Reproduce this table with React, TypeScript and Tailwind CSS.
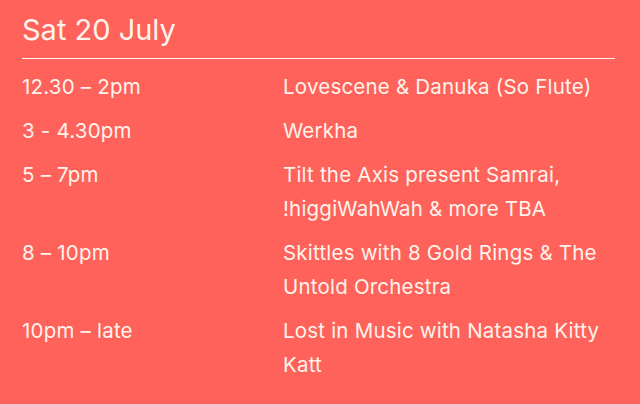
const schedule = [
  { time: "12.30 – 2pm", act: "Lovescene & Danuka (So Flute)" },
  { time: "3 - 4.30pm", act: "Werkha" },
  { time: "5 – 7pm", act: "Tilt the Axis present Samrai, !higgiWahWah & more TBA" },
  { time: "8 – 10pm", act: "Skittles with 8 Gold Rings & The Untold Orchestra" },
  { time: "10pm – late", act: "Lost in Music with Natasha Kitty Katt" },
];

export default function App() {
  return (
    <div className="w-[640px] h-[404px] overflow-hidden bg-[#fe625a] text-[#fff3ec] font-['Inter',sans-serif]">
      <div className="pl-[22px] pr-[25px] pt-[11px]">
        <h2 className="text-[29px] leading-[38px] font-normal pb-[9px] border-b border-[#fff3ec]">
          Sat 20 July
        </h2>
        <div className="flex flex-col gap-[10px] pt-[11px]">
          {schedule.map((row) => (
            <div key={row.time} className="grid grid-cols-[261px_1fr] text-[20.5px] tracking-[0.01em] leading-[34px]">
              <div>{row.time}</div>
              <div className="pr-[8px]">{row.act}</div>
            </div>
          ))}
        </div>
      </div>
    </div>
  );
}
